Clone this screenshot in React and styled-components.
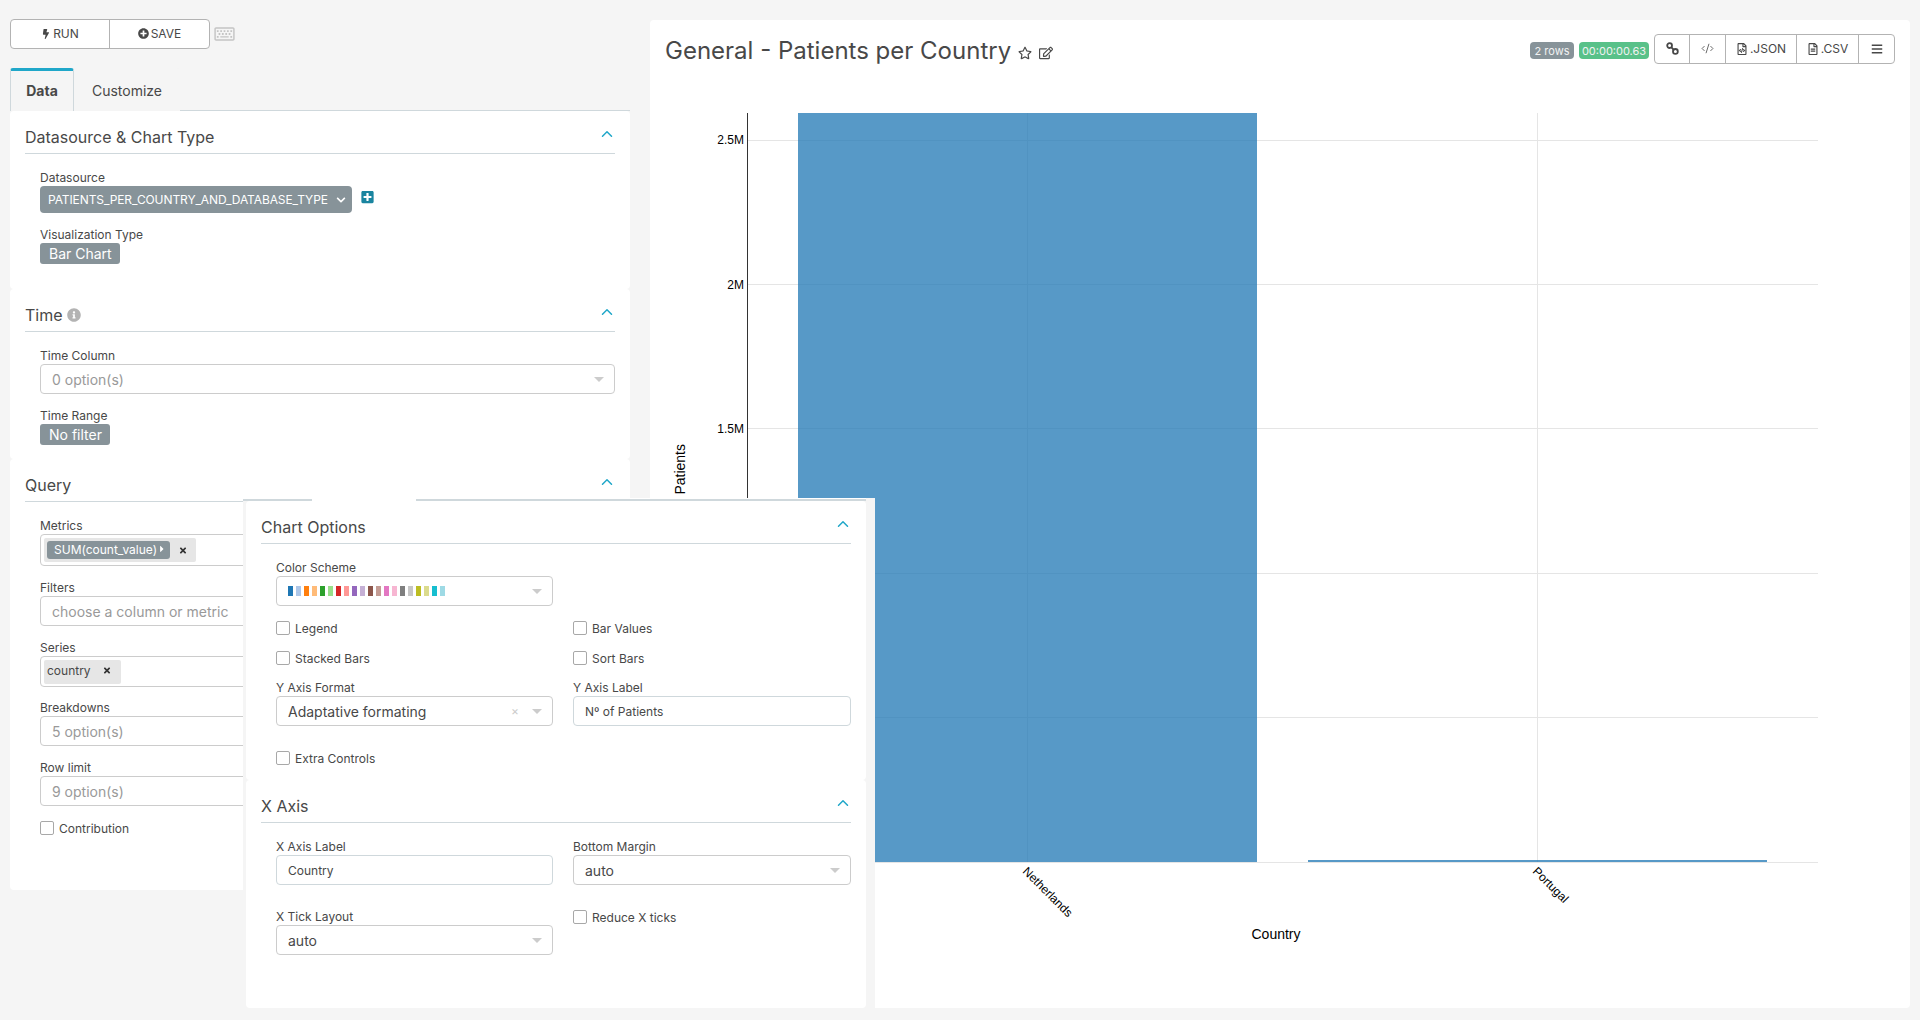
import styled, { createGlobalStyle } from "styled-components";
import {
  FaBolt,
  FaPlusCircle,
  FaRegKeyboard,
  FaPlusSquare,
  FaInfoCircle,
  FaRegFileCode,
  FaRegFileAlt,
  FaBars,
  FaRegStar,
  FaRegEdit,
  FaChevronDown,
  FaCaretRight,
  FaTimes,
} from "react-icons/fa";
import { ChevronUp, CodeXml } from "lucide-react";

const GlobalStyle = createGlobalStyle`
  * { box-sizing: border-box; }
  html, body { margin: 0; padding: 0; background: #f5f5f5; }
  body { font-family: Inter, "Liberation Sans", sans-serif; color: #484848; }
  #root { height: 1020px; overflow: hidden; }
`;

const Page = styled.div`
  position: relative;
  display: flex;
  width: 1920px;
  height: 1020px;
`;

const LeftCol = styled.div`
  width: 650px;
  flex-shrink: 0;
  padding: 19px 20px 0 10px;
`;

const Toolbar = styled.div`
  display: flex;
  align-items: center;
  gap: 4px;
  height: 30px;
  margin-bottom: 19px;
`;

const ButtonGroup = styled.div`
  display: flex;
  height: 30px;
  border: 1px solid #b3b3b3;
  border-radius: 4px;
  background: #fff;
`;

const GroupButton = styled.div`
  display: flex;
  align-items: center;
  justify-content: center;
  gap: 2px;
  width: ${(p) => p.$width}px;
  padding-bottom: 1px;
  font-size: 12px;
  color: #484848;
  border-right: 1px solid #b3b3b3;
  &:last-child { border-right: none; }
`;

const KeyboardIcon = styled(FaRegKeyboard)`
  width: 21px;
  height: 18px;
  color: #c4c4c4;
`;

const TabBar = styled.div`
  display: flex;
  height: 43px;
  border-bottom: 1px solid #cfd8dc;
`;

const Tab = styled.div`
  display: flex;
  align-items: center;
  justify-content: center;
  width: ${(p) => p.$width}px;
  height: 43px;
  padding-bottom: 1px;
  font-size: 14px;
  font-weight: ${(p) => (p.$active ? 700 : 400)};
  border-top: 3px solid ${(p) => (p.$active ? "#20a7c9" : "transparent")};
  border-left: 1px solid ${(p) => (p.$active ? "#cfd8dc" : "transparent")};
  border-right: 1px solid ${(p) => (p.$active ? "#cfd8dc" : "transparent")};
  border-radius: 3px 3px 0 0;
  background: #f5f5f5;
`;

const Panel = styled.section`
  background: #fff;
  border-radius: 4px;
  padding: 0 15px ${(p) => p.$bottom}px;
`;

const PanelHead = styled.div`
  display: flex;
  align-items: center;
  justify-content: space-between;
  height: 43px;
  padding-top: 10px;
  font-size: 16px;
  color: #484848;
  border-bottom: 1px solid #cfd8dc;
`;

const HeadTitle = styled.span`
  display: flex;
  align-items: center;
  gap: 4px;
`;

const Chevron = styled(ChevronUp)`
  width: 18px;
  height: 18px;
  margin: -6px -1px 0 0;
  color: #20a7c9;
`;

const InfoIcon = styled(FaInfoCircle)`
  width: 14px;
  height: 14px;
  color: #b3b3b3;
`;

const PanelBody = styled.div`
  padding: 17px 0 0 15px;
`;

const Field = styled.div`
  margin-bottom: ${(p) => (p.$bottom === undefined ? 15 : p.$bottom)}px;
`;

const Label = styled.div`
  height: 14px;
  margin-bottom: 1px;
  font-size: 12px;
  line-height: 14px;
  color: #484848;
`;

const SourceRow = styled.div`
  display: flex;
  gap: 9px;
`;

const SourceSelect = styled.div`
  display: flex;
  align-items: center;
  justify-content: space-between;
  width: 312px;
  height: 27px;
  padding: 0 6px 0 8px;
  font-size: 12px;
  letter-spacing: -0.1px;
  color: #fff;
  white-space: nowrap;
  background: #879399;
  border-radius: 4px;
`;

const SourceCaret = styled(FaChevronDown)`
  width: 10px;
  height: 10px;
`;

const AddIcon = styled(FaPlusSquare)`
  width: 13px;
  height: 14px;
  margin-top: 4px;
  color: #1a85a0;
`;

const GrayTag = styled.div`
  display: inline-flex;
  align-items: center;
  height: 21px;
  padding: 0 8px 0 9px;
  font-size: 14px;
  color: #fff;
  background: #879399;
  border-radius: 3px;
`;

const Control = styled.div`
  display: flex;
  align-items: center;
  justify-content: space-between;
  height: ${(p) => p.$height || 30}px;
  padding: 0 10px 0 ${(p) => (p.$chips ? 3 : 11)}px;
  font-size: 14px;
  color: ${(p) => (p.$muted ? "#999" : "#484848")};
  white-space: nowrap;
  background: #fff;
  border: 1px solid #ccc;
  border-radius: 4px;
`;

const TextBox = styled(Control)`
  font-size: 12px;
  border: 1px solid #cfd8dc;
`;

const ControlEnd = styled.span`
  display: flex;
  align-items: center;
  gap: 13px;
`;

const Caret = styled.span`
  width: 0;
  height: 0;
  border-left: 5px solid transparent;
  border-right: 5px solid transparent;
  border-top: 5px solid #ccc;
`;

const Clear = styled.span`
  font-size: 12px;
  line-height: 12px;
  color: #ccc;
`;

const Chip = styled.div`
  display: flex;
  align-items: center;
  gap: ${(p) => (p.$wide ? 12 : 9)}px;
  height: 24px;
  padding: 0 ${(p) => (p.$wide ? 10 : 9)}px ${(p) => (p.$wide ? 2 : 0)}px 3px;
  font-size: 12px;
  color: #484848;
  background: #e6e6e6;
  border-radius: 2px;
`;

const ChipPill = styled.span`
  display: flex;
  align-items: center;
  height: 18px;
  padding: 0 3px 2px 7px;
  color: #fff;
  background: #879399;
  border-radius: 3px;
`;

const ChipX = styled(FaTimes)`
  width: 8px;
  height: 9px;
  color: #333;
`;

const Swatches = styled.div`
  display: flex;
  gap: 3px;
`;

const Swatch = styled.span`
  width: 5px;
  height: 10px;
  background: ${(p) => p.$color};
`;

const CheckRow = styled.label`
  display: flex;
  align-items: center;
  gap: 5px;
  height: 14px;
  margin-bottom: ${(p) => (p.$bottom === undefined ? 16 : p.$bottom)}px;
  font-size: 12px;
  color: #484848;
`;

const CheckBox = styled.span`
  width: 14px;
  height: 14px;
  background: #fff;
  border: 1px solid #a8a8a8;
  border-radius: 2px;
`;

const ChartCol = styled.div`
  flex: 1;
  padding: 20px 10px 12px 0;
`;

const ChartPanel = styled.main`
  display: flex;
  flex-direction: column;
  height: 100%;
  background: #fff;
  border-radius: 4px;
`;

const ChartHead = styled.header`
  display: flex;
  align-items: flex-start;
  justify-content: space-between;
  height: 62px;
  padding: 13px 15px 0;
`;

const ChartTitle = styled.div`
  display: flex;
  align-items: center;
  gap: 7px;
  height: 34px;
  font-size: 24px;
  color: #484848;
`;

const TitleIcons = styled.span`
  display: flex;
  align-items: center;
  gap: 7px;
  margin-top: 5px;
  svg { width: 14px; height: 14px; color: #484848; }
`;

const HeadActions = styled.div`
  display: flex;
  align-items: flex-start;
  gap: 5px;
  margin-top: 1px;
`;

const Badge = styled.span`
  display: flex;
  align-items: center;
  justify-content: center;
  width: ${(p) => p.$width}px;
  height: 17px;
  margin-top: 8px;
  font-size: 11px;
  color: #f2f2f2;
  background: ${(p) => p.$color};
  border-radius: 4px;
`;

const ChartSvg = styled.svg`
  display: block;
  flex: 1;
  width: 100%;
  min-height: 0;
  line { shape-rendering: crispEdges; }
`;

const AxisText = styled.text`
  font-family: "Liberation Sans", Arial, sans-serif;
  font-size: ${(p) => p.$size || 12}px;
  fill: #000;
`;

/* the Customize tab sits over the form and chart, as in the source capture */
const Overlay = styled.aside`
  position: absolute;
  left: 243px;
  top: 498px;
  width: 632px;
  height: 522px;
  padding-right: 9px;
  background: #f5f5f5;
`;

const OverlayRule = styled.div`
  display: flex;
  height: 3px;
  background: #fff;
`;

const RuleSegment = styled.span`
  flex: ${(p) => (p.$grow ? 1 : "none")};
  width: ${(p) => p.$width || 0}px;
  border-bottom: ${(p) => (p.$line ? "2px solid #cfd8dc" : "none")};
`;

const OverlayPanels = styled.div`
  margin-left: 3px;
`;

const FormGrid = styled.div`
  display: grid;
  grid-template-columns: 277px 278px;
  column-gap: 20px;
  align-items: start;
`;

const categories = [
  "#1f77b4", "#aec7e8", "#ff7f0e", "#ffbb78", "#2ca02c", "#98df8a", "#d62728", "#ff9896", "#9467bd", "#c5b0d5",
  "#8c564b", "#c49c94", "#e377c2", "#f7b6d2", "#7f7f7f", "#c7c7c7", "#bcbd22", "#dbdb8d", "#17becf", "#9edae5",
];

const yTicks = [
  { y: 140.5, textY: 143.5, label: "2.5M" },
  { y: 284.5, textY: 288.5, label: "2M" },
  { y: 428.5, textY: 432.5, label: "1.5M" },
  { y: 573.5, textY: 577.5, label: "1M" },
  { y: 717.5, textY: 721.5, label: "500k" },
];

function Head({ children }) {
  return (
    <PanelHead>
      <HeadTitle>{children}</HeadTitle>
      <Chevron strokeWidth={2} />
    </PanelHead>
  );
}

function Check({ label, bottom }) {
  return (
    <CheckRow $bottom={bottom}>
      <CheckBox />
      {label}
    </CheckRow>
  );
}

function SelectBox({ value, muted, clear, children }) {
  return (
    <Control $muted={muted}>
      {children || value}
      <ControlEnd>
        {clear && <Clear>×</Clear>}
        <Caret />
      </ControlEnd>
    </Control>
  );
}

function LinkIcon() {
  return (
    <svg width="13" height="13" viewBox="0 0 13 13" fill="none" stroke="#484848" strokeWidth="1.8">
      <circle cx="3.6" cy="3.6" r="2.4" />
      <circle cx="9.4" cy="9.4" r="2.4" />
      <path d="M5.2 5.2 7.8 7.8" />
    </svg>
  );
}

function Chart() {
  return (
    <ChartSvg viewBox="650 82 1260 926" preserveAspectRatio="none">
      {yTicks.map((t) => (
        <g key={t.label}>
          <line x1="748" x2="1818" y1={t.y} y2={t.y} stroke="#e5e5e5" />
          <AxisText x="744" y={t.textY} textAnchor="end">{t.label}</AxisText>
        </g>
      ))}
      <line x1="1027.5" x2="1027.5" y1="113" y2="862" stroke="#e5e5e5" />
      <line x1="1537.5" x2="1537.5" y1="113" y2="862" stroke="#e5e5e5" />
      <rect x="798" y="113" width="459" height="749" fill="#1f77b4" fillOpacity="0.75" />
      <rect x="1308" y="860" width="459" height="2" fill="#1f77b4" fillOpacity="0.75" />
      <line x1="798" x2="1818" y1="862.5" y2="862.5" stroke="#e5e5e5" />
      <line x1="747.5" x2="747.5" y1="113" y2="862" stroke="#333" />
      <AxisText x="685" y="444" $size={14} textAnchor="end" transform="rotate(-90 685 444)">Nº of Patients</AxisText>
      <AxisText x="1022" y="872" transform="rotate(45 1022 872)">Netherlands</AxisText>
      <AxisText x="1532" y="872" transform="rotate(45 1532 872)">Portugal</AxisText>
      <AxisText x="1276" y="939" $size={14} textAnchor="middle">Country</AxisText>
    </ChartSvg>
  );
}

export default function App() {
  return (
    <Page>
      <GlobalStyle />
      <LeftCol>
        <Toolbar>
          <ButtonGroup>
            <GroupButton $width={99}><FaBolt size={10} /> RUN</GroupButton>
            <GroupButton $width={99}><FaPlusCircle size={11} /> SAVE</GroupButton>
          </ButtonGroup>
          <KeyboardIcon />
        </Toolbar>

        <TabBar>
          <Tab $active $width={64}>Data</Tab>
          <Tab $width={106}>Customize</Tab>
        </TabBar>

        <Panel $bottom={25}>
          <Head>Datasource &amp; Chart Type</Head>
          <PanelBody>
            <Field>
              <Label>Datasource</Label>
              <SourceRow>
                <SourceSelect>
                  PATIENTS_PER_COUNTRY_AND_DATABASE_TYPE
                  <SourceCaret />
                </SourceSelect>
                <AddIcon />
              </SourceRow>
            </Field>
            <Field $bottom={0}>
              <Label>Visualization Type</Label>
              <GrayTag>Bar Chart</GrayTag>
            </Field>
          </PanelBody>
        </Panel>

        <Panel $bottom={14}>
          <Head>Time <InfoIcon /></Head>
          <PanelBody>
            <Field>
              <Label>Time Column</Label>
              <SelectBox value="0 option(s)" muted />
            </Field>
            <Field $bottom={0}>
              <Label>Time Range</Label>
              <GrayTag>No filter</GrayTag>
            </Field>
          </PanelBody>
        </Panel>

        <Panel $bottom={55}>
          <Head>Query</Head>
          <PanelBody>
            <Field>
              <Label>Metrics</Label>
              <Control $chips $height={32}>
                <Chip>
                  <ChipPill>SUM(count_value)<FaCaretRight size={10} /></ChipPill>
                  <ChipX />
                </Chip>
              </Control>
            </Field>
            <Field>
              <Label>Filters</Label>
              <Control $muted>choose a column or metric</Control>
            </Field>
            <Field $bottom={14}>
              <Label>Series</Label>
              <Control $chips $height={31}>
                <Chip $wide>country <ChipX /></Chip>
              </Control>
            </Field>
            <Field>
              <Label>Breakdowns</Label>
              <SelectBox value="5 option(s)" muted />
            </Field>
            <Field>
              <Label>Row limit</Label>
              <SelectBox value="9 option(s)" muted />
            </Field>
            <Check label="Contribution" bottom={0} />
          </PanelBody>
        </Panel>
      </LeftCol>

      <ChartCol>
        <ChartPanel>
          <ChartHead>
            <ChartTitle>
              General - Patients per Country
              <TitleIcons><FaRegStar /><FaRegEdit /></TitleIcons>
            </ChartTitle>
            <HeadActions>
              <Badge $width={44} $color="#879399">2 rows</Badge>
              <Badge $width={70} $color="#59c189">00:00:00.63</Badge>
              <ButtonGroup>
                <GroupButton $width={35}><LinkIcon /></GroupButton>
                <GroupButton $width={36}><CodeXml size={13} strokeWidth={1.5} /></GroupButton>
                <GroupButton $width={71}><FaRegFileCode size={12} /> .JSON</GroupButton>
                <GroupButton $width={62}><FaRegFileAlt size={12} /> .CSV</GroupButton>
                <GroupButton $width={35}><FaBars size={12} /></GroupButton>
              </ButtonGroup>
            </HeadActions>
          </ChartHead>
          <Chart />
        </ChartPanel>
      </ChartCol>

      <Overlay>
        <OverlayRule>
          <RuleSegment $line $width={69} />
          <RuleSegment $width={104} />
          <RuleSegment $line $grow />
        </OverlayRule>
        <OverlayPanels>
          <Panel $bottom={15}>
            <Head>Chart Options</Head>
            <PanelBody>
              <FormGrid>
                <Field>
                  <Label>Color Scheme</Label>
                  <SelectBox>
                    <Swatches>
                      {categories.map((c) => <Swatch key={c} $color={c} />)}
                    </Swatches>
                  </SelectBox>
                </Field>
                <span />
                <Check label="Legend" />
                <Check label="Bar Values" />
                <Check label="Stacked Bars" />
                <Check label="Sort Bars" />
                <Field $bottom={25}>
                  <Label>Y Axis Format</Label>
                  <SelectBox value="Adaptative formating" clear />
                </Field>
                <Field $bottom={25}>
                  <Label>Y Axis Label</Label>
                  <TextBox>Nº of Patients</TextBox>
                </Field>
                <Check label="Extra Controls" bottom={0} />
              </FormGrid>
            </PanelBody>
          </Panel>
          <Panel $bottom={53}>
            <Head>X Axis</Head>
            <PanelBody>
              <FormGrid>
                <Field $bottom={25}>
                  <Label>X Axis Label</Label>
                  <TextBox>Country</TextBox>
                </Field>
                <Field $bottom={25}>
                  <Label>Bottom Margin</Label>
                  <SelectBox value="auto" />
                </Field>
                <Field $bottom={0}>
                  <Label>X Tick Layout</Label>
                  <SelectBox value="auto" />
                </Field>
                <Check label="Reduce X ticks" bottom={0} />
              </FormGrid>
            </PanelBody>
          </Panel>
        </OverlayPanels>
      </Overlay>
    </Page>
  );
}
